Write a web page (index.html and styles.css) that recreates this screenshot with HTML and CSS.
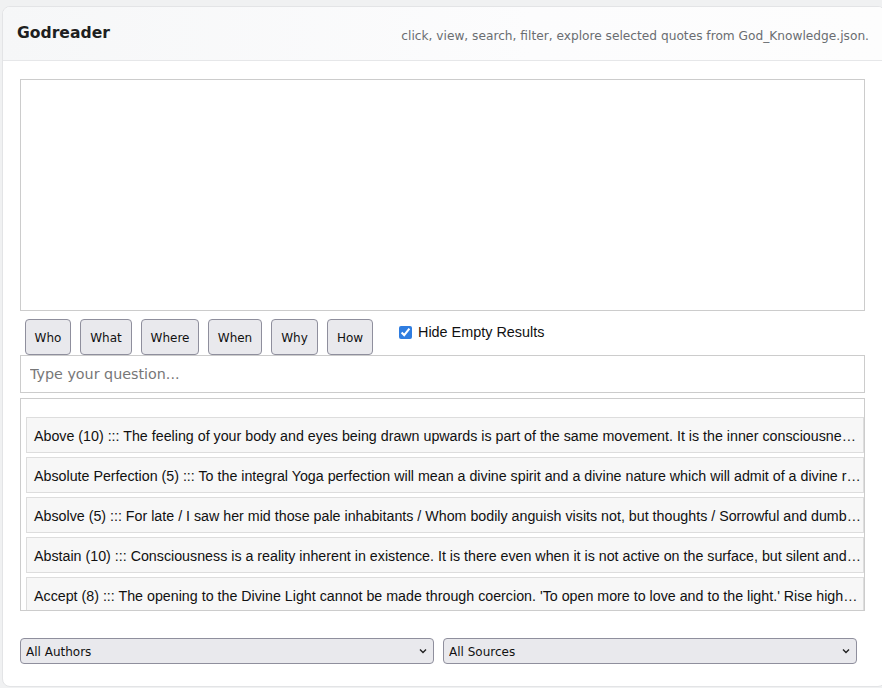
FILE: index.html
```html
<!DOCTYPE html>
<html lang="en">
<head>
<meta charset="utf-8">
<title>Godreader</title>
<link rel="stylesheet" href="styles.css">
</head>
<body>
<div class="card">
  <div class="card-header">
    <h1 class="title">Godreader</h1>
    <span class="subtitle">click, view, search, filter, explore selected quotes from God_Knowledge.json.</span>
  </div>
  <div class="card-body">
    <div class="viewer"></div>
    <div class="controls">
      <button class="qbtn">Who</button>
      <button class="qbtn">What</button>
      <button class="qbtn">Where</button>
      <button class="qbtn">When</button>
      <button class="qbtn">Why</button>
      <button class="qbtn">How</button>
      <label class="hide-empty"><input type="checkbox" checked> Hide Empty Results</label>
    </div>
    <input class="question" type="text" placeholder="Type your question...">
    <div class="results">
      <div class="item">Above (10) ::: The feeling of your body and eyes being drawn upwards is part of the same movement. It is the inner consciousness that is opening itself to the higher consciousness above.</div>
      <div class="item">Absolute Perfection (5) ::: To the integral Yoga perfection will mean a divine spirit and a divine nature which will admit of a divine relation of the mind.</div>
      <div class="item">Absolve (5) ::: For late / I saw her mid those pale inhabitants / Whom bodily anguish visits not, but thoughts / Sorrowful and dumb remembrance.</div>
      <div class="item">Abstain (10) ::: Consciousness is a reality inherent in existence. It is there even when it is not active on the surface, but silent and immobile.</div>
      <div class="item">Accept (8) ::: The opening to the Divine Light cannot be made through coercion. 'To open more to love and to the light.' Rise higher and higher.</div>
    </div>
    <div class="filters">
      <div class="select-wrap">
        <select class="sel"><option>All Authors</option></select>
        <svg class="chev" width="10" height="6" viewBox="0 0 10 6"><path d="M2 1.5 L5 4.5 L8 1.5" fill="none" stroke="#222" stroke-width="1.4"/></svg>
      </div>
      <div class="select-wrap">
        <select class="sel"><option>All Sources</option></select>
        <svg class="chev" width="10" height="6" viewBox="0 0 10 6"><path d="M2 1.5 L5 4.5 L8 1.5" fill="none" stroke="#222" stroke-width="1.4"/></svg>
      </div>
    </div>
  </div>
</div>
</body>
</html>
```
FILE: styles.css
```css
html, body {
  margin: 0;
  padding: 0;
}
body {
  background: #f0f1f2;
  overflow: hidden;
  width: 882px;
  height: 688px;
  font-family: "DejaVu Sans", sans-serif;
}
.card {
  margin: 6px 0 0 2px;
  width: 884px;
  height: 681px;
  box-sizing: border-box;
  background: #fff;
  border: 1px solid #e3e4e6;
  border-radius: 8px;
  overflow: hidden;
  display: flex;
  flex-direction: column;
}
.card-header {
  flex: none;
  height: 54px;
  box-sizing: border-box;
  padding: 0 16px 0 14px;
  display: flex;
  align-items: center;
  justify-content: space-between;
  background: linear-gradient(to right, #f6f7f8, #fcfcfd 60%, #fdfdfd);
  border-bottom: 1px solid #e6e7e9;
}
.title {
  margin: 0;
  font-size: 15.6px;
  font-weight: bold;
  color: #1e1f21;
  position: relative;
  top: -1px;
}
.subtitle {
  font-size: 12.2px;
  color: #6a6d71;
  padding-top: 4px;
}
.card-body {
  padding: 18px 20px 0 17px;
  display: flex;
  flex-direction: column;
}
.viewer {
  height: 230px;
  border: 1px solid #cccccc;
  background: #fff;
}
.controls {
  display: flex;
  align-items: flex-start;
  margin-top: 8px;
  padding-left: 5px;
  height: 36px;
}
.qbtn {
  height: 36px;
  box-sizing: border-box;
  margin-right: 9px;
  padding: 2px 8px 0;
  font-family: "DejaVu Sans", sans-serif;
  font-size: 12px;
  color: #111;
  background: #e9e9ed;
  border: 1px solid #8f8f9d;
  border-radius: 4px;
}
.qbtn:nth-child(1) { width: 46px; }
.qbtn:nth-child(2) { width: 52px; }
.qbtn:nth-child(3) { width: 58px; }
.qbtn:nth-child(4) { width: 54px; }
.qbtn:nth-child(5) { width: 47px; }
.qbtn:nth-child(6) { width: 46px; }
.hide-empty {
  display: flex;
  align-items: center;
  margin-left: 17px;
  margin-top: 5px;
  font-family: "Liberation Sans", Arial, sans-serif;
  font-size: 14.4px;
  color: #111;
}
.hide-empty input {
  width: 13px;
  height: 13px;
  margin: 0 6px 0 0;
  accent-color: #2f7de0;
}
.question {
  height: 38px;
  box-sizing: border-box;
  border: 1px solid #cccccc;
  padding: 0 9px;
  font-family: "DejaVu Sans", sans-serif;
  font-size: 14.3px;
  color: #333;
  outline: none;
}
.question::placeholder {
  color: #777;
}
.results {
  margin-top: 5px;
  height: 213px;
  box-sizing: border-box;
  border: 1px solid #cccccc;
  padding: 18px 0 0 5px;
  overflow: hidden;
  display: flex;
  flex-direction: column;
  gap: 4px;
}
.item {
  flex: none;
  height: 36px;
  box-sizing: border-box;
  line-height: 34px;
  padding: 1px 1px 0 7px;
  background: #f7f7f7;
  border: 1px solid #dddddd;
  font-family: "Liberation Sans", Arial, sans-serif;
  font-size: 14.25px;
  color: #111;
  white-space: nowrap;
  overflow: hidden;
  text-overflow: ellipsis;
}
.filters {
  display: flex;
  gap: 9px;
  margin-top: 27px;
  padding-right: 8px;
}
.select-wrap {
  flex: 1;
  position: relative;
}
.sel {
  appearance: none;
  -webkit-appearance: none;
  width: 100%;
  height: 26px;
  box-sizing: border-box;
  padding: 1px 20px 0 5px;
  font-family: "DejaVu Sans", sans-serif;
  font-size: 12px;
  color: #111;
  background: #e9e9ed;
  border: 1px solid #8f8f9d;
  border-radius: 4px;
}
.chev {
  position: absolute;
  right: 6px;
  top: 10px;
  pointer-events: none;
}
```
